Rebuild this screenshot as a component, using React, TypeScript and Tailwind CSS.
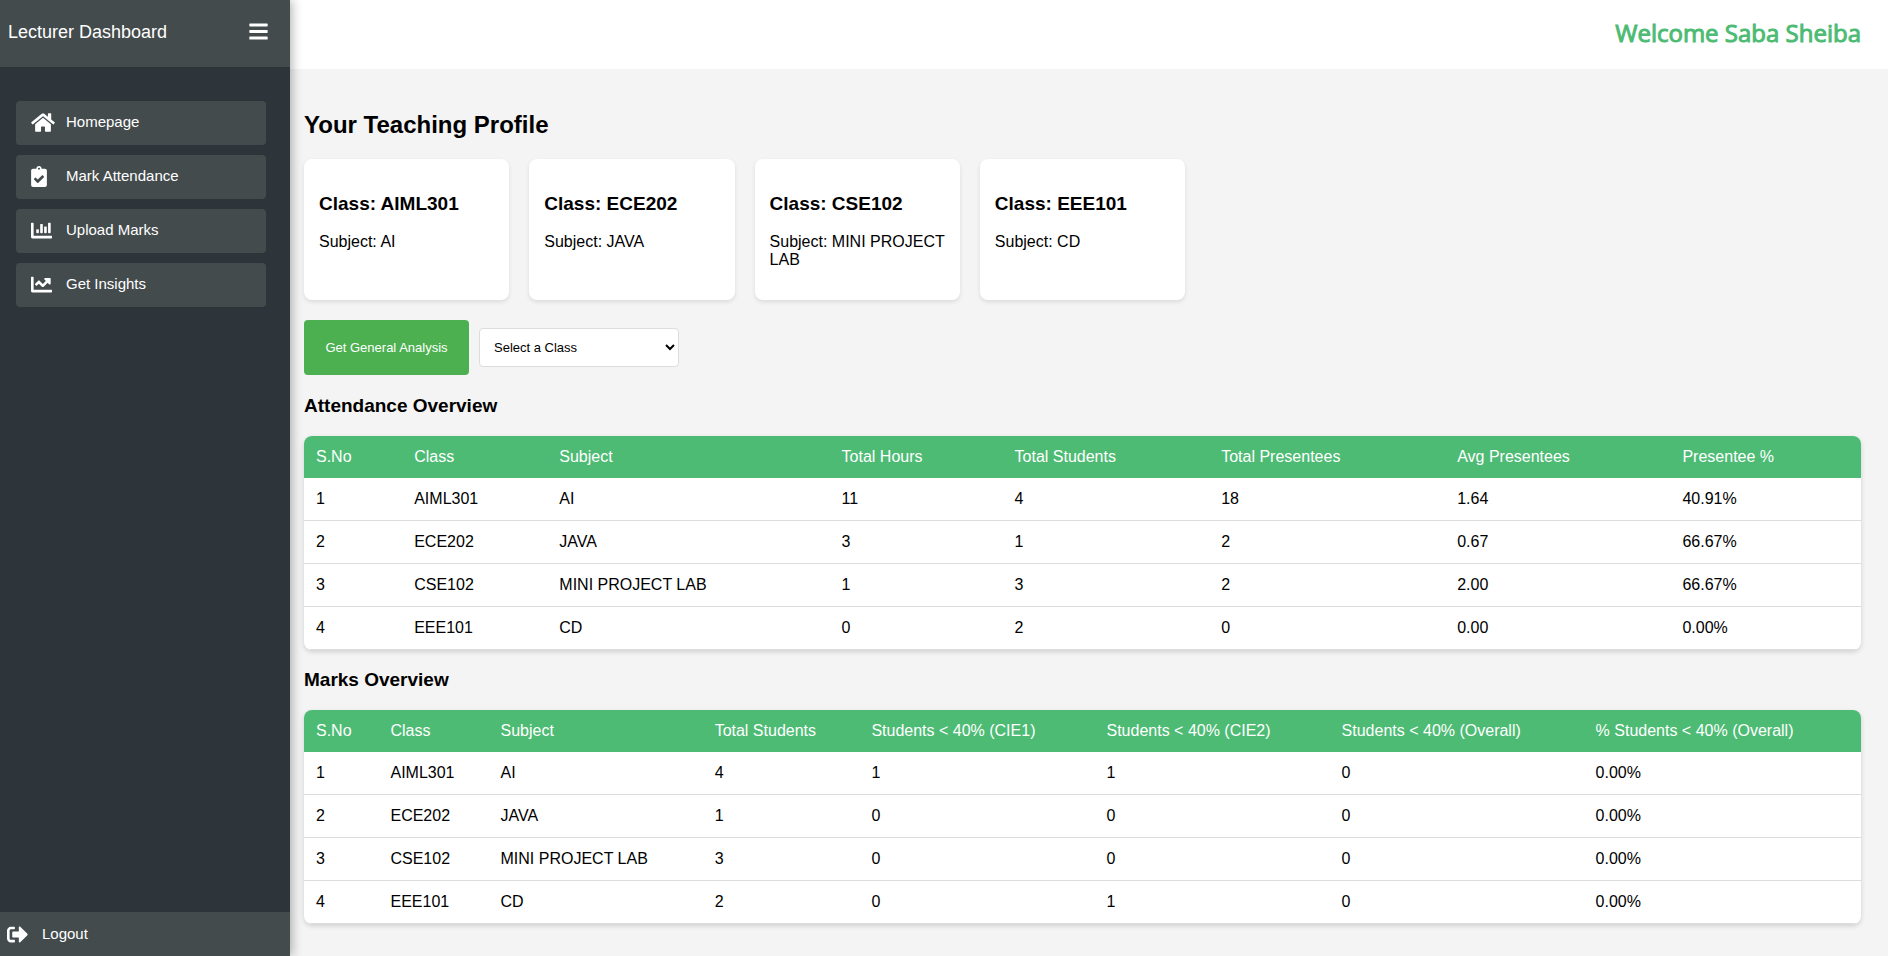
import { FaBars, FaChartBar, FaChartLine, FaClipboardCheck, FaHome, FaSignOutAlt } from "react-icons/fa";
import type { IconType } from "react-icons";

const navItems: { label: string; icon: IconType; iconWidth: string }[] = [
  { label: "Homepage", icon: FaHome, iconWidth: "w-6" },
  { label: "Mark Attendance", icon: FaClipboardCheck, iconWidth: "w-4" },
  { label: "Upload Marks", icon: FaChartBar, iconWidth: "w-[21px]" },
  { label: "Get Insights", icon: FaChartLine, iconWidth: "w-[21px]" },
];

const classes = [
  { name: "AIML301", subject: "AI" },
  { name: "ECE202", subject: "JAVA" },
  { name: "CSE102", subject: "MINI PROJECT LAB" },
  { name: "EEE101", subject: "CD" },
];

const attendance = {
  columns: ["S.No", "Class", "Subject", "Total Hours", "Total Students", "Total Presentees", "Avg Presentees", "Presentee %"],
  rows: [
    ["1", "AIML301", "AI", "11", "4", "18", "1.64", "40.91%"],
    ["2", "ECE202", "JAVA", "3", "1", "2", "0.67", "66.67%"],
    ["3", "CSE102", "MINI PROJECT LAB", "1", "3", "2", "2.00", "66.67%"],
    ["4", "EEE101", "CD", "0", "2", "0", "0.00", "0.00%"],
  ],
};

const marks = {
  columns: [
    "S.No",
    "Class",
    "Subject",
    "Total Students",
    "Students < 40% (CIE1)",
    "Students < 40% (CIE2)",
    "Students < 40% (Overall)",
    "% Students < 40% (Overall)",
  ],
  rows: [
    ["1", "AIML301", "AI", "4", "1", "1", "0", "0.00%"],
    ["2", "ECE202", "JAVA", "1", "0", "0", "0", "0.00%"],
    ["3", "CSE102", "MINI PROJECT LAB", "3", "0", "0", "0", "0.00%"],
    ["4", "EEE101", "CD", "2", "0", "1", "0", "0.00%"],
  ],
};

function DataTable({ title, columns, rows }: { title: string; columns: string[]; rows: string[][] }) {
  return (
    <section className="mb-[19px]">
      <h3 className="text-[19px] leading-[21px] font-bold">{title}</h3>
      <table className="mt-5 w-full border-separate border-spacing-0 overflow-hidden rounded-lg bg-white text-left leading-[18px] shadow-[0_2px_5px_rgba(0,0,0,0.15)]">
        <thead>
          <tr className="bg-[#4dbb74] text-white">
            {columns.map((column) => (
              <th key={column} scope="col" className="p-3 font-normal">
                {column}
              </th>
            ))}
          </tr>
        </thead>
        <tbody>
          {rows.map((row) => (
            <tr key={row[0]}>
              {row.map((cell, i) => (
                <td key={i} className="border-b border-[#dddddd] p-3">
                  {cell}
                </td>
              ))}
            </tr>
          ))}
        </tbody>
      </table>
    </section>
  );
}

function Sidebar() {
  return (
    <aside className="z-10 flex w-[290px] shrink-0 flex-col bg-[#2d343a] text-white shadow-[2px_0_10px_rgba(0,0,0,0.3)]">
      <div className="flex h-[67px] items-center justify-between bg-[#434b4d] pr-[22px] pb-1 pl-2">
        <span className="text-lg leading-6">Lecturer Dashboard</span>
        <button type="button" aria-label="Toggle menu">
          <FaBars className="h-[21px] w-[19px]" />
        </button>
      </div>
      <nav className="mt-[34px] ml-4 flex w-[250px] flex-col gap-2.5">
        {navItems.map(({ label, icon: Icon, iconWidth }) => (
          <a key={label} href="#" className="flex h-11 items-center rounded bg-[#434b4d] pb-0.5 pl-[15px] text-[15px]">
            <span className="w-[35px]">
              <Icon className={`h-[21px] ${iconWidth}`} />
            </span>
            {label}
          </a>
        ))}
      </nav>
      <a href="#" className="mt-auto flex h-11 items-center bg-[#434b4d] pl-[7px] text-[15px]">
        <span className="w-[35px]">
          <FaSignOutAlt className="h-[21px] w-[21px]" />
        </span>
        Logout
      </a>
    </aside>
  );
}

export default function App() {
  return (
    <div className="flex min-h-screen bg-[#f4f4f4] font-['Liberation_Sans',Arial,sans-serif] text-base text-black">
      <Sidebar />
      <div className="min-w-0 flex-1">
        <header className="flex h-[69px] items-center justify-end bg-white pr-[27px] pb-1">
          <p className="font-['Open_Sans',sans-serif] text-2xl leading-9 text-[#4dbb74] [-webkit-text-stroke:1px_#4dbb74]">
            Welcome Saba Sheiba
          </p>
        </header>
        <main className="pt-[42px] pr-[27px] pl-3.5">
          <h2 className="text-2xl leading-7 font-bold">Your Teaching Profile</h2>
          <div className="mt-5 grid grid-cols-[repeat(auto-fill,minmax(200px,1fr))] gap-5">
            {classes.map(({ name, subject }) => (
              <article
                key={name}
                className="h-[141px] rounded-lg bg-white px-[15px] pt-[34px] shadow-[0_2px_4px_rgba(0,0,0,0.1)]"
              >
                <h3 className="text-[19px] leading-[21px] font-bold">{`Class: ${name}`}</h3>
                <p className="mt-[19px] leading-[18px]">{`Subject: ${subject}`}</p>
              </article>
            ))}
          </div>
          <div className="mt-5 mb-5 flex items-center gap-2.5 text-[13px]">
            <button type="button" className="h-[55px] w-[165px] rounded bg-[#4caf50] text-white">
              Get General Analysis
            </button>
            <select aria-label="Select a class" className="h-[39px] w-[200px] rounded border border-[#dddddd] bg-white px-2.5">
              <option>Select a Class</option>
              {classes.map(({ name }) => (
                <option key={name}>{name}</option>
              ))}
            </select>
          </div>
          <DataTable title="Attendance Overview" {...attendance} />
          <DataTable title="Marks Overview" {...marks} />
        </main>
      </div>
    </div>
  );
}
